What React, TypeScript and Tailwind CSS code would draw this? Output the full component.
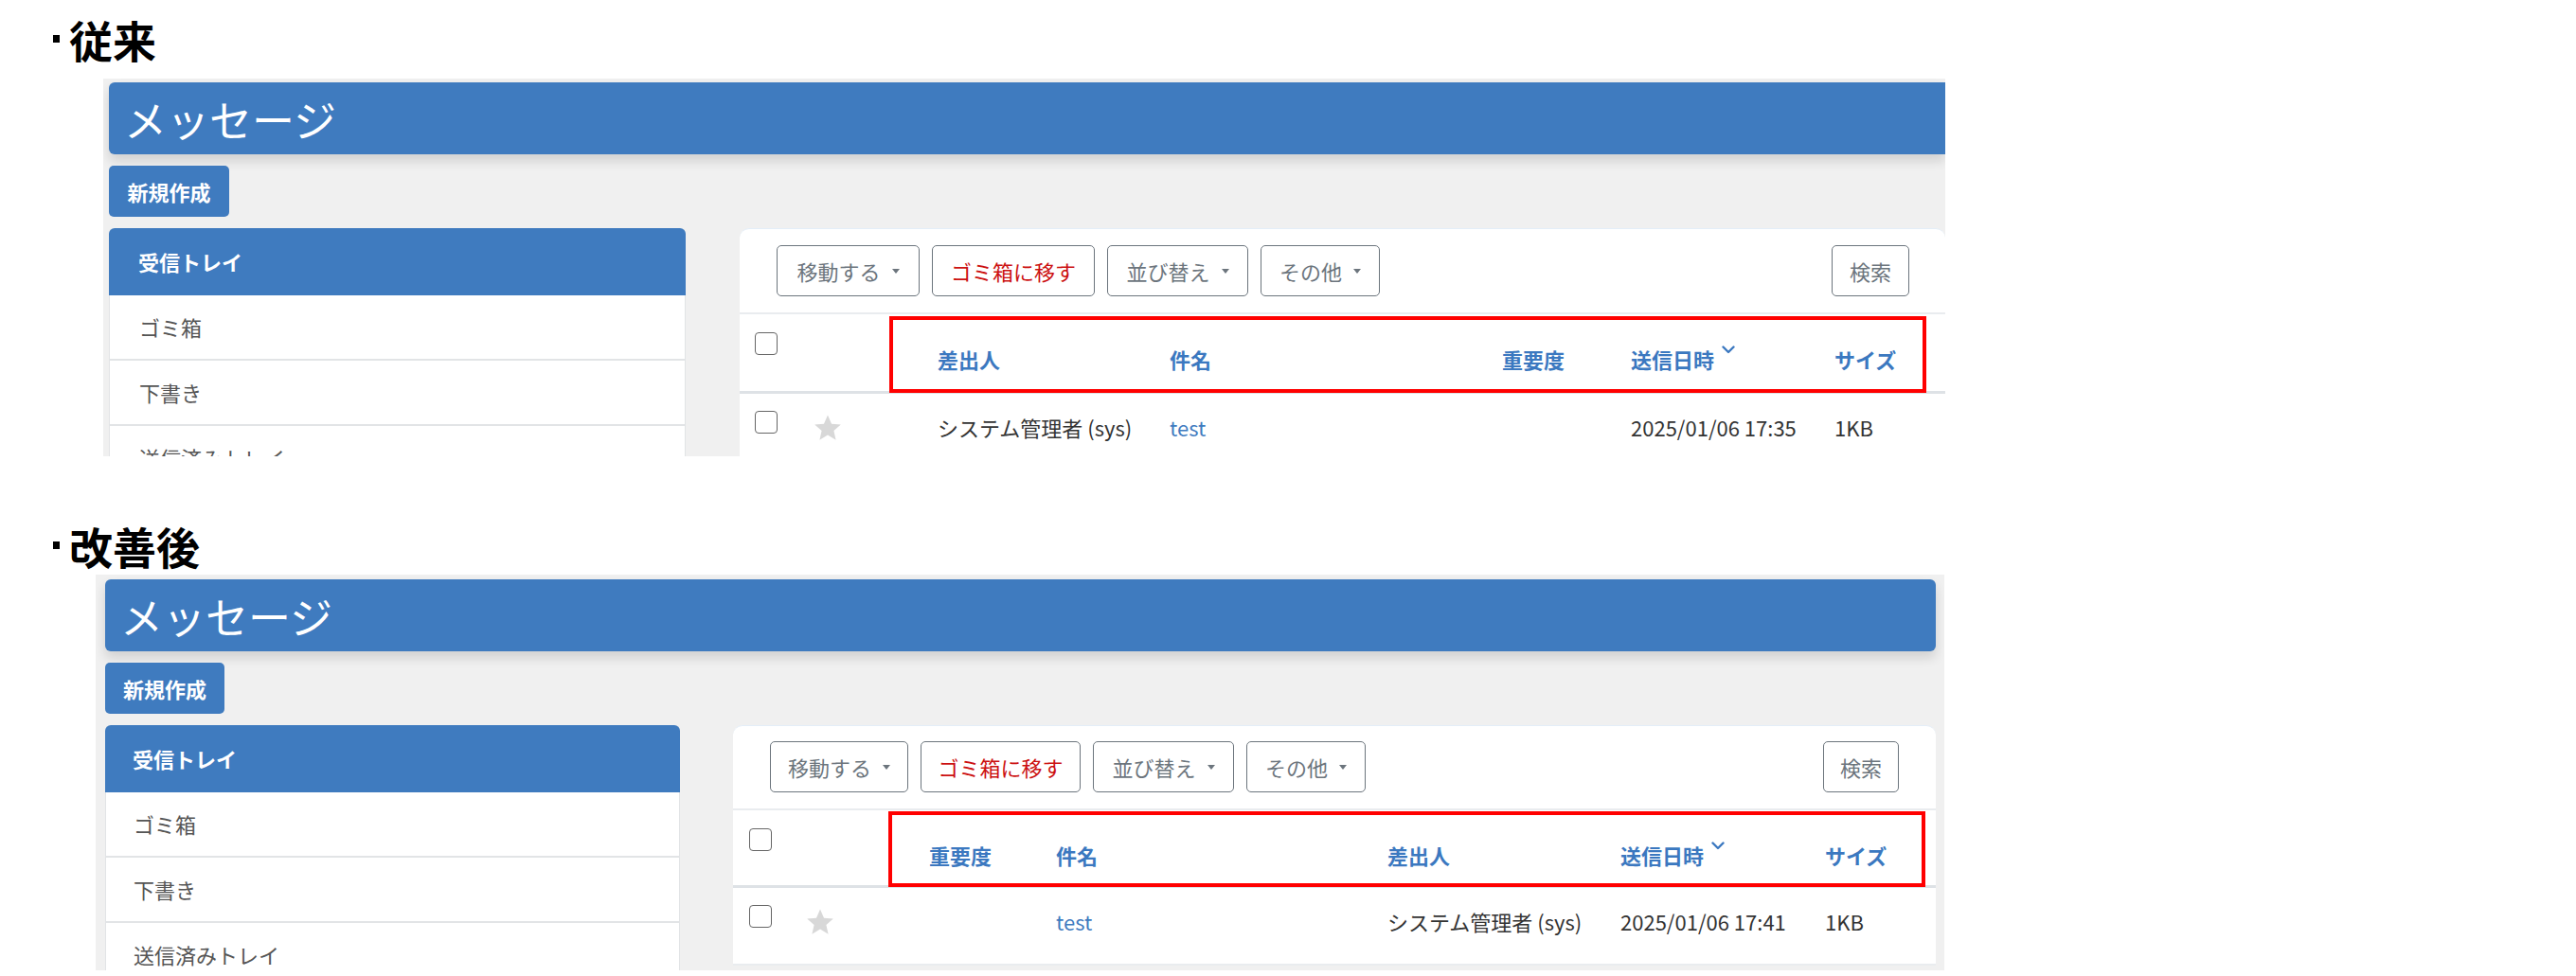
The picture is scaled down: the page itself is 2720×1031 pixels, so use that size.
import React from "react";

type Col = { label: string; w: string; chevron?: boolean };
type Cfg = {
  panel: string;
  header: string;
  headerText: string;
  newBtn: string;
  sidebar: string;
  itemPl: string;
  card: string;
  toolbar: string;
  btnWs: string[];
  searchW: string;
  tablePl: string;
  cbW: string;
  starW: string;
  cols: Col[];
  row: { text: string; link?: boolean }[];
  headRowH: string;
  redBox: string;
};

const BLUE = "bg-[#3f7bbf]";

function Caret() {
  return <span className="ml-[12px] inline-block w-0 h-0 border-x-[4px] border-x-transparent border-t-[5px] border-t-[#6c757d]" />;
}

function Checkbox() {
  return <span className="block w-[24px] h-[24px] rounded-[4px] border-[1.5px] border-[#666] bg-white" />;
}

function Star() {
  return (
    <svg width="32" height="30" viewBox="0 0 24 23" className="block">
      <path d="M12 1.2l3.1 7.1 7.5.6-5.7 4.9 1.7 7.4L12 17.3l-6.6 3.9 1.7-7.4L1.4 8.9l7.5-.6z" fill="#d8d8d8" />
    </svg>
  );
}

function Chevron() {
  return (
    <svg width="14" height="9" viewBox="0 0 14 9" className="ml-[8px] mt-[2px] block">
      <path d="M1.5 1.5 L7 7 L12.5 1.5" fill="none" stroke="#3b78c0" strokeWidth="2.4" strokeLinecap="round" strokeLinejoin="round" />
    </svg>
  );
}

function Heading({ text, cls }: { text: string; cls: string }) {
  return (
    <div className={`pl-[56px] flex items-center gap-[10px] h-[46px] ${cls}`}>
      <span className="block w-[7px] h-[8px] bg-black" />
      <span className="text-[46px] leading-none font-bold text-black">{text}</span>
    </div>
  );
}

function Panel({ c }: { c: Cfg }) {
  const labels = [
    { t: "移動する", caret: true, red: false },
    { t: "ゴミ箱に移す", caret: false, red: true },
    { t: "並び替え", caret: true, red: false },
    { t: "その他", caret: true, red: false },
  ];
  return (
    <div className={`bg-[#f0f0f0] overflow-hidden flex flex-col ${c.panel}`}>
      <div className={`${BLUE} h-[76px] shrink-0 flex items-center shadow-[0_7px_12px_rgba(0,0,0,0.13)] ${c.header}`}>
        <span className={`text-white text-[45px] leading-none font-normal ${c.headerText}`}>メッセージ</span>
      </div>
      <div className={`mt-[12px] ${BLUE} h-[54px] shrink-0 rounded-[5px] flex items-center justify-center text-white text-[22px] font-bold ${c.newBtn}`}>
        新規作成
      </div>
      <div className="mt-[12px] flex flex-1 min-h-0 items-start">
        <div className={`flex flex-col shrink-0 ${c.sidebar}`}>
          <div className={`${BLUE} h-[71px] shrink-0 rounded-t-[6px] flex items-center text-white text-[22px] font-bold ${c.itemPl}`}>受信トレイ</div>
          {["ゴミ箱", "下書き", "送信済みトレイ"].map((t) => (
            <div key={t} className={`bg-white h-[69px] shrink-0 border-x-[1.5px] border-b-[2px] border-[#e2e4e6] flex items-center text-[22px] text-[#555] ${c.itemPl}`}>
              {t}
            </div>
          ))}
        </div>
        <div className={`relative bg-white rounded-t-[10px] border-t border-[#e4eef8] flex flex-col shrink-0 ${c.card}`}>
          <div className={`flex items-center px-[39px] pb-[17px] border-b-[2px] border-[#e9ecef] ${c.toolbar}`}>
            <div className="flex gap-[13px]">
              {labels.map((b, i) => (
                <div
                  key={b.t}
                  className={`h-[54px] rounded-[5px] border-[1.5px] border-[#6c757d] flex items-center justify-center text-[22px] ${b.red ? "text-[#cc1111]" : "text-[#6c757d]"} ${c.btnWs[i]}`}
                >
                  {b.t}
                  {b.caret && <Caret />}
                </div>
              ))}
            </div>
            <div className={`ml-auto h-[54px] rounded-[5px] border-[1.5px] border-[#6c757d] flex items-center justify-center text-[22px] text-[#6c757d] ${c.searchW}`}>
              検索
            </div>
          </div>
          <div className={`flex border-b-[3px] border-[#dee2e6] ${c.headRowH} ${c.tablePl}`}>
            <div className={`pt-[19px] ${c.cbW}`}>
              <Checkbox />
            </div>
            <div className={c.starW} />
            {c.cols.map((col) => (
              <div key={col.label} className={`pt-[31px] flex items-start ${col.w}`}>
                <span className="text-[22px] leading-[32px] font-bold text-[#3b78c0]">{col.label}</span>
                {col.chevron && <Chevron />}
              </div>
            ))}
          </div>
          <div className={`flex h-[82px] border-b-[2px] border-[#e9ecef] ${c.tablePl}`}>
            <div className={`pt-[18px] ${c.cbW}`}>
              <Checkbox />
            </div>
            <div className={`pt-[21px] ${c.starW}`}>
              <Star />
            </div>
            {c.row.map((r, i) => (
              <div key={i} className={`pt-[19px] ${c.cols[i].w}`}>
                <span className={`text-[22px] leading-[32px] whitespace-nowrap ${r.link ? "text-[#3f7bbf]" : "text-[#333]"}`}>{r.text}</span>
              </div>
            ))}
          </div>
          <div className={`absolute border-[4px] border-[#ff0000] ${c.redBox}`} />
        </div>
      </div>
    </div>
  );
}

const before: Cfg = {
  panel: "ml-[109px] w-[1945px] h-[399px] pt-[4px] pl-[6px]",
  header: "rounded-l-[6px]",
  headerText: "pl-[16px]",
  newBtn: "w-[127px]",
  sidebar: "w-[609px]",
  itemPl: "pl-[31px]",
  card: "ml-[57px] w-[1273px]",
  toolbar: "pt-[17px]",
  btnWs: ["w-[151px]", "w-[172px]", "w-[149px]", "w-[126px]"],
  searchW: "w-[82px] mr-[-1px]",
  tablePl: "pl-[16px]",
  cbW: "w-[61px]",
  starW: "w-[132px]",
  cols: [
    { label: "差出人", w: "w-[245px]" },
    { label: "件名", w: "w-[351px]" },
    { label: "重要度", w: "w-[136px]" },
    { label: "送信日時", w: "w-[215px]", chevron: true },
    { label: "サイズ", w: "w-[110px]" },
  ],
  row: [
    { text: "システム管理者 (sys)" },
    { text: "test", link: true },
    { text: "" },
    { text: "2025/01/06 17:35" },
    { text: "1KB" },
  ],
  headRowH: "h-[84px]",
  redBox: "left-[158px] top-[92px] w-[1095px] h-[81px]",
};

const after: Cfg = {
  panel: "ml-[101px] w-[1952px] h-[418px] pt-[5px] pl-[10px] pr-[9px]",
  header: "rounded-[6px]",
  headerText: "pl-[16px]",
  newBtn: "w-[126px]",
  sidebar: "w-[607px]",
  itemPl: "pl-[29px]",
  card: "ml-[56px] w-[1270px]",
  toolbar: "pt-[16px]",
  btnWs: ["w-[146px]", "w-[169px]", "w-[149px]", "w-[126px]"],
  searchW: "w-[80px]",
  tablePl: "pl-[17px]",
  cbW: "w-[59px]",
  starW: "w-[131px]",
  cols: [
    { label: "重要度", w: "w-[134px]" },
    { label: "件名", w: "w-[350px]" },
    { label: "差出人", w: "w-[246px]" },
    { label: "送信日時", w: "w-[216px]", chevron: true },
    { label: "サイズ", w: "w-[110px]" },
  ],
  row: [
    { text: "" },
    { text: "test", link: true },
    { text: "システム管理者 (sys)" },
    { text: "2025/01/06 17:41" },
    { text: "1KB" },
  ],
  headRowH: "h-[82px]",
  redBox: "left-[164px] top-[90px] w-[1095px] h-[80px]",
};

export default function App() {
  return (
    <div className="w-[2720px] h-[1031px] bg-white overflow-hidden flex flex-col font-['Noto_Sans_CJK_JP','Noto_Sans_CJK_SC',sans-serif]">
      <Heading text="従来" cls="mt-[18px]" />
      <div className="mt-[19px]">
        <Panel c={before} />
      </div>
      <Heading text="改善後" cls="mt-[71px]" />
      <div className="mt-[8px]">
        <Panel c={after} />
      </div>
    </div>
  );
}
